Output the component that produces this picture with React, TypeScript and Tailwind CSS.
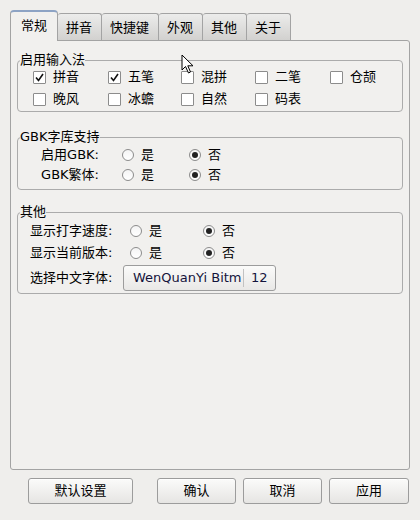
const font = { fontFamily: '"DejaVu Sans", "Noto Sans CJK SC", sans-serif' };

function Tab({ label, active }: { label: string; active?: boolean }) {
    if (active) {
        return (
            <div className="relative z-10 -mb-px h-[31px] px-[10px] pt-[6px] bg-[#f1f0ee] border border-b-0 border-[#a3a3a3] border-t-[#8da3c4] border-t-2 rounded-t-[4px] text-[13px] leading-[16px]">
                {label}
            </div>
        );
    }
    return (
        <div className="h-[27px] pl-[8px] pr-[9px] pt-[6px] bg-gradient-to-b from-[#ececeb] to-[#d2d1cf] border border-l-0 border-b-0 border-[#a3a3a3] rounded-t-[3px] text-[13px] leading-[16px]">
            {label}
        </div>
    );
}

function Check({ label, checked }: { label: string; checked?: boolean }) {
    return (
        <div className="flex items-center gap-[7px] h-[18px]">
            <span className="w-[13px] h-[13px] border border-[#8c8c8c] bg-white rounded-[1px] flex items-center justify-center">
                {checked && (
                    <svg width="9" height="9" viewBox="0 0 9 9">
                        <path d="M1 4.5 L3.5 7.5 L8 1" fill="none" stroke="#111" strokeWidth="1.6" />
                    </svg>
                )}
            </span>
            <span className="text-[13px]">{label}</span>
        </div>
    );
}

function Radio({ label, checked }: { label: string; checked?: boolean }) {
    return (
        <div className="flex items-center gap-[7px]">
            <span className="w-[12px] h-[12px] rounded-full border border-[#8c8c8c] bg-gradient-to-b from-[#f4f4f4] to-white flex items-center justify-center">
                {checked && <span className="w-[6px] h-[6px] rounded-full bg-[#222]" />}
            </span>
            <span className="text-[13px]">{label}</span>
        </div>
    );
}

function Button({ label, w }: { label: string; w: string }) {
    return (
        <button className={`${w} h-[26px] border border-[#9c9c9c] rounded-[3px] bg-gradient-to-b from-[#fbfbfa] to-[#e6e5e3] text-[13px] shadow-[inset_0_1px_0_#fff]`}>
            {label}
        </button>
    );
}

export default function App() {
    const methods: [string, boolean][] = [
        ["拼音", true], ["五笔", true], ["混拼", false], ["二笔", false], ["仓颉", false],
        ["晚风", false], ["冰蟾", false], ["自然", false], ["码表", false],
    ];

    return (
        <div className="relative w-[420px] h-[520px] bg-[#efeeec] text-black pl-[10px] pr-[10px] pt-[10px]" style={font}>
            <div className="flex items-end">
                <Tab label="常规" active />
                <Tab label="拼音" />
                <Tab label="快捷键" />
                <Tab label="外观" />
                <Tab label="其他" />
                <Tab label="关于" />
            </div>

            <div className="h-[430px] bg-[#f1f0ee] border border-[#a3a3a3] rounded-tr-[3px] rounded-b-[3px] px-[6px] pt-[11px]">
                <fieldset className="border border-[#ababab] rounded-[4px] pb-[3px]">
                    <legend className="ml-[2px] text-[13px] leading-[16px]">启用输入法</legend>
                    <div className="grid grid-cols-[75px_73px_74px_75px_1fr] gap-y-[4px] pl-[15px]">
                        {methods.map(([m, c]) => (
                            <Check key={m} label={m} checked={c} />
                        ))}
                    </div>
                </fieldset>

                <fieldset className="mt-[17px] border border-[#ababab] rounded-[4px] pb-[4px]">
                    <legend className="ml-[2px] text-[13px] leading-[16px]">GBK字库支持</legend>
                    {["启用GBK:", "GBK繁体:"].map((l) => (
                        <div key={l} className="flex items-center h-[20px]">
                            <span className="w-[81px] text-right text-[13px]">{l}</span>
                            <div className="ml-[23px] w-[67px]"><Radio label="是" /></div>
                            <Radio label="否" checked />
                        </div>
                    ))}
                </fieldset>

                <fieldset className="mt-[14px] border border-[#ababab] rounded-[4px] pb-[2px]">
                    <legend className="ml-[2px] text-[13px] leading-[16px]">其他</legend>
                    {["显示打字速度:", "显示当前版本:"].map((l) => (
                        <div key={l} className="flex items-center h-[22px] pl-[12px]">
                            <span className="w-[100px] text-[13px]">{l}</span>
                            <div className="w-[73px]"><Radio label="是" /></div>
                            <Radio label="否" checked />
                        </div>
                    ))}
                    <div className="flex items-center pl-[12px] mt-[1px]">
                        <span className="w-[93px] text-[13px]">选择中文字体:</span>
                        <div className="flex items-center w-[153px] h-[26px] border border-[#9c9c9c] rounded-[3px] bg-gradient-to-b from-[#fbfbfa] to-[#e9e8e6] text-[13px] text-[#14143c]">
                            <span className="w-[119px] pl-[9px] overflow-hidden whitespace-nowrap">WenQuanYi Bitm</span>
                            <span className="w-px h-[18px] bg-[#c2c2c2]" />
                            <span className="pl-[7px]">12</span>
                        </div>
                    </div>
                </fieldset>
            </div>

            <div className="flex mt-[8px] pl-[18px]">
                <Button label="默认设置" w="w-[105px]" />
                <div className="ml-[24px] flex gap-[7px]">
                    <Button label="确认" w="w-[79px]" />
                    <Button label="取消" w="w-[79px]" />
                    <Button label="应用" w="w-[80px]" />
                </div>
            </div>

            <svg className="absolute left-[181px] top-[54px]" width="14" height="21" viewBox="0 0 14 21">
                <path d="M1 1 L1 16 L4.5 12.5 L7.5 19 L9.5 18 L6.8 11.8 L12 11.8 Z" fill="#fff" stroke="#000" strokeWidth="1" strokeLinejoin="round" />
            </svg>
        </div>
    );
}
